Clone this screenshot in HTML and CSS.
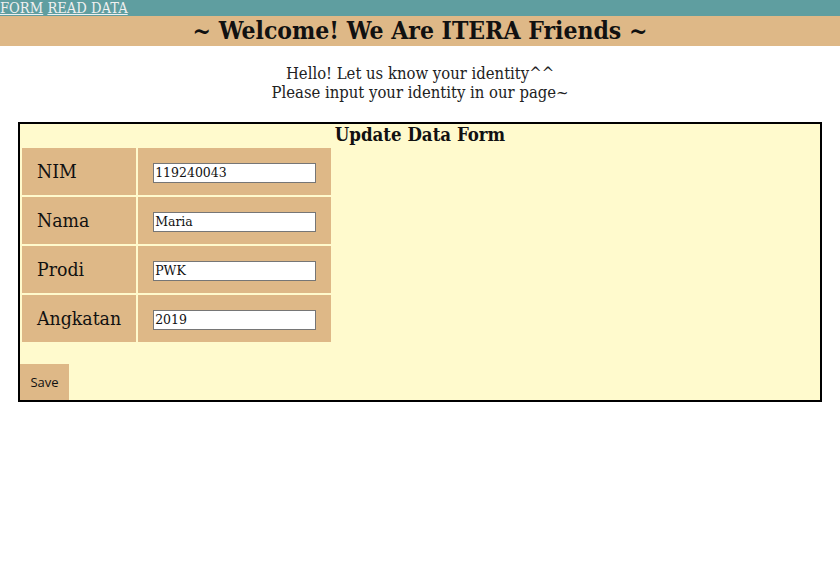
FILE: index.html
```html
<!DOCTYPE html>
<html>
<head>
<meta charset="utf-8">
<title>ITERA Friends</title>
<link rel="stylesheet" href="styles.css">
</head>
<body>
<nav class="topnav"><a href="#">FORM</a> <a href="#">READ DATA</a></nav>
<h1 class="banner">~ Welcome! We Are ITERA Friends ~</h1>
<p class="intro">Hello! Let us know your identity^^<br>Please input your identity in our page~</p>
<form class="box">
  <h3 class="box-title">Update Data Form</h3>
  <table class="fields">
    <tr><td class="label">NIM</td><td class="value"><input class="field" type="text" value="119240043"></td></tr>
    <tr><td class="label">Nama</td><td class="value"><input class="field" type="text" value="Maria"></td></tr>
    <tr><td class="label">Prodi</td><td class="value"><input class="field" type="text" value="PWK"></td></tr>
    <tr><td class="label">Angkatan</td><td class="value"><input class="field" type="text" value="2019"></td></tr>
  </table>
  <button class="save" type="button">Save</button>
</form>
</body>
</html>
```
FILE: styles.css
```css
body {
  margin: 0;
  font-family: "DejaVu Serif Condensed", "DejaVu Serif", serif;
  background: #ffffff;
  color: #111;
}
.topnav {
  background: #5f9ea0;
  height: 16px;
  font-size: 14.6px;
  line-height: 16px;
  white-space: nowrap;
}
.topnav a {
  color: #f0f0f0;
  text-decoration: underline;
}
.banner {
  margin: 0;
  background: #deb887;
  height: 30px;
  line-height: 30px;
  font-size: 24.5px;
  font-weight: bold;
  text-align: center;
  color: #111;
}
.intro {
  margin: 18px 0 20px;
  text-align: center;
  font-size: 16.5px;
  font-weight: 300;
  line-height: 19px;
  color: #222;
}
.box {
  margin: 0 18px;
  border: 2px solid #000;
  background: #fffacd;
}
.box-title {
  margin: 0;
  height: 22px;
  line-height: 22px;
  font-size: 18.5px;
  font-weight: bold;
  text-align: center;
}
.fields {
  border-spacing: 2px;
}
.fields td {
  background: #deb887;
  height: 47px;
  padding: 0 15px;
  vertical-align: middle;
}
.label {
  font-size: 19.3px;
}
.field {
  box-sizing: border-box;
  width: 163px;
  height: 20px;
  margin-top: 2px;
  border: 1px solid #767676;
  padding: 1px 1px;
  font-family: "DejaVu Serif", serif;
  font-size: 12.5px;
  background: #fff;
  color: #111;
}
.save {
  display: block;
  margin-top: 20px;
  width: 49px;
  height: 36px;
  border: none;
  padding: 0;
  background: #deb887;
  font-family: "Open Sans", sans-serif;
  font-size: 13px;
  color: #111;
}
```
